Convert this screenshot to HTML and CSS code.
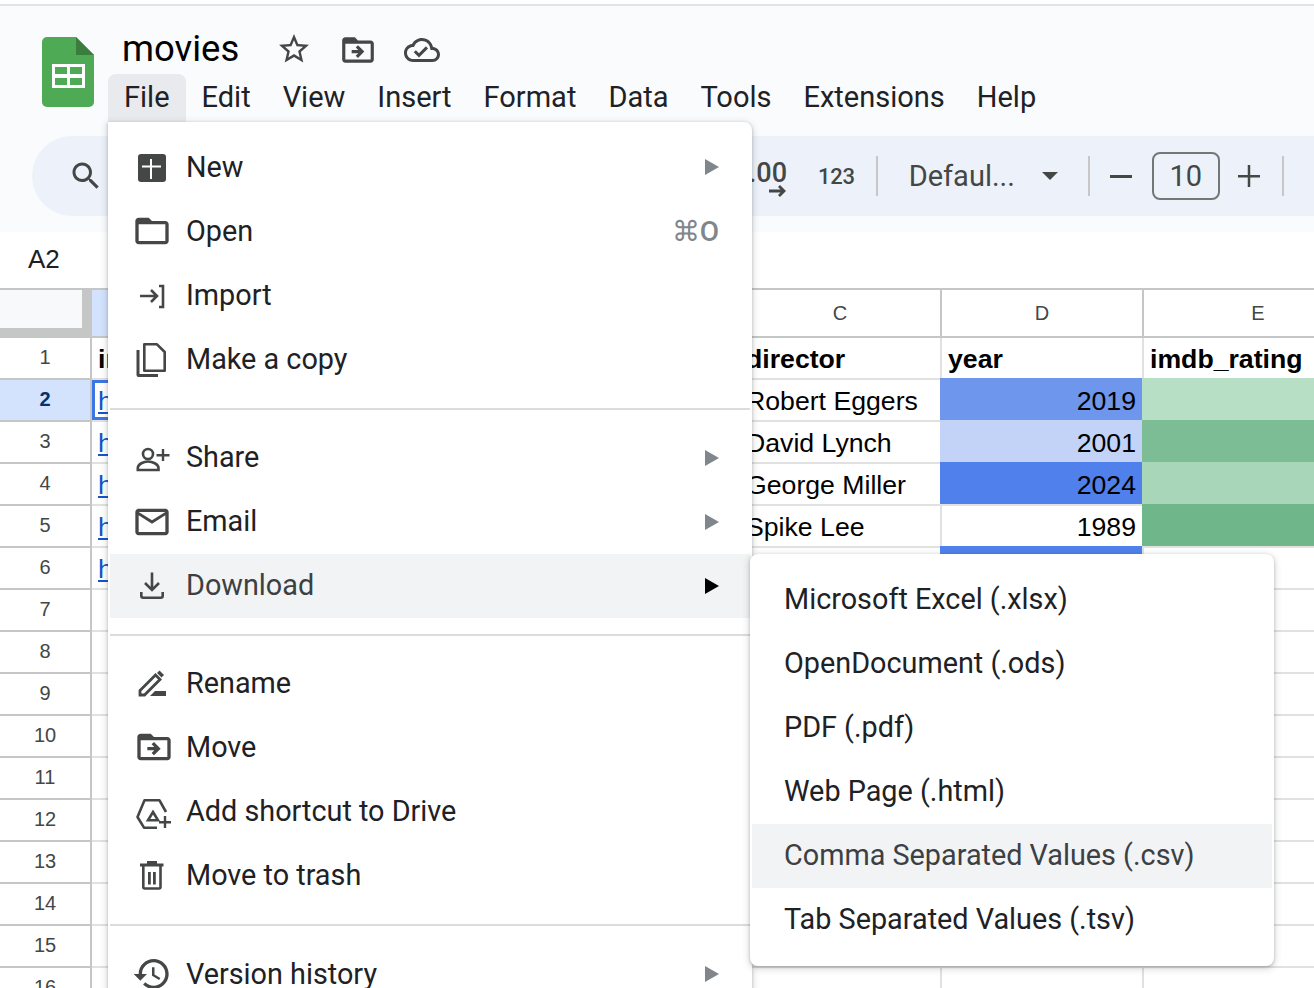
FILE: index.html
```html
<!DOCTYPE html>
<html>
<head>
  <title>movies - Google Sheets</title>
  <link rel="stylesheet" href="styles.css">
</head>
<body>

<header class="topbar">
  <svg class="logo" width="52" height="70" viewBox="0 0 52 70">
    <path d="M5 0H34L52 18V65a5 5 0 0 1-5 5H5a5 5 0 0 1-5-5V5a5 5 0 0 1 5-5z" fill="#4eaa54"/>
    <path d="M34 0L52 18H34z" fill="#3a7d3c"/>
    <path d="M10 27H43V51H10z" fill="#fff"/>
    <path d="M13 30H25V37H13zM28 30H40V37H28zM13 41H25V48H13zM28 41H40V48H28z" fill="#4eaa54"/>
  </svg>
  <div class="title-col">
    <div class="title-row">
      <span class="doc-title">movies</span>
      <svg class="star" width="36" height="36" viewBox="0 0 24 24"><path d="M22 9.24l-7.19-.62L12 2 9.19 8.63 2 9.24l5.46 4.73L5.82 21 12 17.27 18.18 21l-1.63-7.03L22 9.24zM12 15.4l-3.76 2.27 1-4.28-3.32-2.88 4.38-.38L12 6.1l1.71 4.04 4.38.38-3.32 2.88 1 4.28L12 15.4z"/></svg>
      <svg class="move-top" width="38" height="38" viewBox="0 0 24 24"><path d="M20 6h-8l-2-2H4c-1.1 0-2 .9-2 2v12c0 1.1.9 2 2 2h16c1.1 0 2-.9 2-2V8c0-1.1-.9-2-2-2zm0 12H4V8h16v10zm-8.01-9l-1.41 1.41L12.16 12H8v2h4.16l-1.59 1.59L11.99 17 16 13.01 11.99 9z"/></svg>
      <svg class="cloud" width="36" height="36" viewBox="0 0 24 24"><path d="M19.35 10.04C18.67 6.59 15.64 4 12 4 9.11 4 6.6 5.64 5.35 8.04 2.34 8.36 0 10.91 0 14c0 3.31 2.69 6 6 6h13c2.76 0 5-2.24 5-5 0-2.64-2.05-4.78-4.65-4.96zM19 18H6c-2.21 0-4-1.79-4-4 0-2.05 1.53-3.76 3.56-3.97l1.07-.11.5-.95C8.08 7.14 9.94 6 12 6c2.62 0 4.88 1.86 5.39 4.43l.3 1.5 1.53.11c1.56.1 2.78 1.41 2.78 2.96 0 1.65-1.35 3-3 3zm-9-3.82l-2.09-2.09L6.5 13.5 10 17l6.01-6.01-1.41-1.41z"/></svg>
    </div>
    <nav class="menubar">
      <span class="menubar-item active">File</span>
      <span class="menubar-item">Edit</span>
      <span class="menubar-item">View</span>
      <span class="menubar-item">Insert</span>
      <span class="menubar-item">Format</span>
      <span class="menubar-item">Data</span>
      <span class="menubar-item">Tools</span>
      <span class="menubar-item">Extensions</span>
      <span class="menubar-item">Help</span>
    </nav>
  </div>
</header>

<div class="toolbar-wrap">
  <div class="toolbar">
    <svg class="tb-search" width="36" height="36" viewBox="0 0 24 24"><path d="M15.5 14h-.79l-.28-.27C15.41 12.59 16 11.11 16 9.5 16 5.91 13.09 3 9.5 3S3 5.91 3 9.5 5.91 16 9.5 16c1.61 0 3.09-.59 4.23-1.57l.27.28v.79l5 4.99L20.49 19l-4.99-5zm-6 0C7.01 14 5 11.99 5 9.5S7.01 5 9.5 5 14 7.01 14 9.5 11.99 14 9.5 14z"/></svg>
    <div class="tb-decimals">
      <span>.00</span>
      <svg width="18" height="12" viewBox="0 0 18 12"><path d="M0 6H15M10 1L15 6L10 11" fill="none" stroke="#444746" stroke-width="2.800"/></svg>
    </div>
    <span class="tb-123">123</span>
    <span class="tb-sep"></span>
    <span class="tb-font">Defaul...</span>
    <span class="tb-caret"></span>
    <span class="tb-sep"></span>
    <svg class="tb-minus" width="22" height="22" viewBox="0 0 22 22"><path d="M0 10H22V13H0z"/></svg>
    <span class="tb-size">10</span>
    <svg class="tb-plus" width="22" height="22" viewBox="0 0 22 22"><path d="M0 10H22V12.500H0zM9.750 0H12.250V22H9.750z"/></svg>
    <span class="tb-sep"></span>
  </div>
</div>

<div class="formula-bar">A2</div>

<table class="sheet">
  <thead>
    <tr>
      <th class="corner"><span class="corner-box"></span></th>
      <th class="sel"></th><th></th><th>C</th><th>D</th><th>E</th>
    </tr>
  </thead>
  <tbody>
    <tr><th>1</th><td class="bold">imdb</td><td class="bold">title</td><td class="bold">director</td><td class="bold">year</td><td class="bold">imdb_rating</td></tr>
    <tr><th class="sel-row">2</th><td class="active-cell"><a>https</a></td><td></td><td>Robert Eggers</td><td class="num y2019">2019</td><td class="r1"></td></tr>
    <tr><th>3</th><td><a>https</a></td><td></td><td>David Lynch</td><td class="num y2001">2001</td><td class="r2"></td></tr>
    <tr><th>4</th><td><a>https</a></td><td></td><td>George Miller</td><td class="num y2024">2024</td><td class="r3"></td></tr>
    <tr><th>5</th><td><a>https</a></td><td></td><td>Spike Lee</td><td class="num">1989</td><td class="r4"></td></tr>
    <tr><th>6</th><td><a>https</a></td><td></td><td></td><td class="y2024"></td><td></td></tr>
    <tr><th>7</th><td></td><td></td><td></td><td></td><td></td></tr>
    <tr><th>8</th><td></td><td></td><td></td><td></td><td></td></tr>
    <tr><th>9</th><td></td><td></td><td></td><td></td><td></td></tr>
    <tr><th>10</th><td></td><td></td><td></td><td></td><td></td></tr>
    <tr><th>11</th><td></td><td></td><td></td><td></td><td></td></tr>
    <tr><th>12</th><td></td><td></td><td></td><td></td><td></td></tr>
    <tr><th>13</th><td></td><td></td><td></td><td></td><td></td></tr>
    <tr><th>14</th><td></td><td></td><td></td><td></td><td></td></tr>
    <tr><th>15</th><td></td><td></td><td></td><td></td><td></td></tr>
    <tr><th>16</th><td></td><td></td><td></td><td></td><td></td></tr>
  </tbody>
</table>

<div class="menu file-menu">
  <div class="item">
    <svg class="icon" viewBox="0 0 40 40"><rect x="6" y="7" width="28" height="28" rx="3"/><path d="M10 18.500H18V12H20V18.500H29V20.500H20V32H18V20.500H10z" fill="#fff"/></svg>
    <span class="label">New</span><span class="arrow"></span>
  </div>
  <div class="item">
    <svg class="icon" viewBox="0 0 24 24"><path d="M20 6h-8l-2-2H4c-1.100 0-2 .9-2 2v12c0 1.100.9 2 2 2h16c1.100 0 2-.9 2-2V8c0-1.100-.9-2-2-2zm0 12H4V8h16v10z"/></svg>
    <span class="label">Open</span><span class="shortcut">⌘O</span>
  </div>
  <div class="item">
    <svg class="icon" viewBox="0 0 40 40"><path d="M8 21H25M19 15L25 21L19 27M27 11H31V32H27" fill="none" stroke="#444746" stroke-width="2.600"/></svg>
    <span class="label">Import</span>
  </div>
  <div class="item">
    <svg class="icon" viewBox="0 0 40 40"><path d="M12.300 5.300H25L32.700 13V31.700H12.300z" fill="none" stroke="#444746" stroke-width="2.600" stroke-linejoin="round"/><path d="M4.500 11H7.500V35H26V38H6.500a2 2 0 0 1-2-2z"/></svg>
    <span class="label">Make a copy</span>
  </div>
  <div class="sep"></div>
  <div class="item">
    <svg class="icon" viewBox="0 0 40 40"><circle cx="16" cy="16" r="5" fill="none" stroke="#444746" stroke-width="2.600"/><path d="M5.800 32V30c0-4 6-6.500 10.200-6.500s10.500 2.500 10.500 6.500v2z" fill="none" stroke="#444746" stroke-width="2.600"/><path d="M29.800 11H32.200V16H37.500V18.400H32.200V23H29.800V18.400H24.500V16H29.800z"/></svg>
    <span class="label">Share</span><span class="arrow"></span>
  </div>
  <div class="item">
    <svg class="icon" viewBox="0 0 24 24"><path d="M20 4H4c-1.100 0-2 .9-2 2v12c0 1.100.9 2 2 2h16c1.100 0 2-.9 2-2V6c0-1.100-.9-2-2-2zm0 14H4V8l8 5 8-5v10zm-8-7L4 6h16l-8 5z"/></svg>
    <span class="label">Email</span><span class="arrow"></span>
  </div>
  <div class="item hover">
    <svg class="icon" viewBox="0 0 40 40"><path d="M20 6.500V24M13 17L20 24L27 17M9.300 26V29.700a2 2 0 0 0 2 2H28.700a2 2 0 0 0 2-2V26" fill="none" stroke="#444746" stroke-width="2.600"/></svg>
    <span class="label">Download</span><span class="arrow"></span>
  </div>
  <div class="sep"></div>
  <div class="item">
    <svg class="icon" viewBox="0 0 40 40"><path d="M8 32V27.500L23.500 12L28 16.500L12.500 32z" fill="none" stroke="#444746" stroke-width="2.800"/><path d="M25 10L27.500 7.500L32 12L29.500 14.500z"/><path d="M23 28H34V33H18z"/></svg>
    <span class="label">Rename</span>
  </div>
  <div class="item">
    <svg class="icon shift" viewBox="0 0 24 24"><path d="M20 6h-8l-2-2H4c-1.100 0-2 .9-2 2v12c0 1.100.9 2 2 2h16c1.100 0 2-.9 2-2V8c0-1.100-.9-2-2-2zm0 12H4V8h16v10zm-8.010-9l-1.410 1.410L12.160 12H8v2h4.160l-1.590 1.590L11.990 17 16 13.010 11.990 9z"/></svg>
    <span class="label">Move</span>
  </div>
  <div class="item">
    <svg class="icon" viewBox="0 0 40 40"><path d="M34 21L27.500 9.300H12.500L5.500 26L12 36.700H25" fill="none" stroke="#444746" stroke-width="2.600" stroke-linejoin="round"/><path d="M21 21L26 29.300H16z" fill="none" stroke="#444746" stroke-width="2.600"/><path d="M31.800 25H34.200V30H39V32.400H34.200V37H31.800V32.400H27V30H31.800z"/></svg>
    <span class="label">Add shortcut to Drive</span>
  </div>
  <div class="item">
    <svg class="icon" viewBox="0 0 40 40"><path d="M8 8.500H31.500V11.500H8zM15 6H25V9H15z"/><path d="M11.300 11V32a1.500 1.500 0 0 0 1.500 1.500H27a1.500 1.500 0 0 0 1.500-1.500V11" fill="none" stroke="#444746" stroke-width="2.600"/><path d="M16 17H18.800V29.500H16zM21 17H23.800V29.500H21z"/></svg>
    <span class="label">Move to trash</span>
  </div>
  <div class="sep"></div>
  <div class="item">
    <svg class="icon" viewBox="0 0 24 24"><path d="M13 3c-4.970 0-9 4.030-9 9H1l3.890 3.890.07.140L9 12H6c0-3.870 3.130-7 7-7s7 3.130 7 7-3.130 7-7 7c-1.930 0-3.680-.79-4.940-2.060l-1.420 1.420C8.270 19.990 10.510 21 13 21c4.970 0 9-4.030 9-9s-4.030-9-9-9zm-1 5v5l4.280 2.540.72-1.210-3.500-2.080V8H12z"/></svg>
    <span class="label">Version history</span><span class="arrow"></span>
  </div>
</div>

<div class="menu sub-menu">
  <div class="item"><span class="label">Microsoft Excel (.xlsx)</span></div>
  <div class="item"><span class="label">OpenDocument (.ods)</span></div>
  <div class="item"><span class="label">PDF (.pdf)</span></div>
  <div class="item"><span class="label">Web Page (.html)</span></div>
  <div class="item hover"><span class="label">Comma Separated Values (.csv)</span></div>
  <div class="item"><span class="label">Tab Separated Values (.tsv)</span></div>
</div>

</body>
</html>
```

FILE: styles.css
```css
html, body {
  margin: 0;
  height: 988px;
  overflow: hidden;
}

body {
  position: relative;
  background: #fff;
  font-family: Roboto, sans-serif;
  color: #1f1f1f;
}

/* top area */
.topbar {
  display: flex;
  height: 130px;
  margin-top: 4px;
  padding-left: 42px;
  box-sizing: content-box;
  background: #f9fbfd;
  border-top: 2px solid #e1e3e6;
}

.logo {
  margin-top: 31px;
}

.title-col {
  margin-left: 14px;
}

.title-row {
  display: flex;
  align-items: center;
  height: 68px;
  padding-left: 14px;
  fill: #444746;
}

.doc-title {
  font-size: 36.5px;
  color: #000;
  margin-right: 37px;
  position: relative;
  top: 8px;
}

.star { margin-right: 27px; margin-top: 18px; }
.move-top { margin-right: 27px; margin-top: 20px; }
.cloud { margin-top: 20px; }

.menubar {
  display: flex;
}

.menubar-item {
  height: 48px;
  line-height: 46px;
  padding: 0 16px;
  font-size: 29px;
  color: #202124;
}

.menubar-item.active {
  background: #e8eaed;
  border-radius: 8px 8px 0 0;
}

.toolbar-wrap {
  background: #f9fbfd;
  padding: 0 0 16px 32px;
}

.toolbar {
  display: flex;
  align-items: center;
  height: 80px;
  background: #edf2fa;
  border-radius: 40px 0 0 40px;
  padding-left: 36px;
  fill: #444746;
  color: #444746;
}

.tb-search { flex: none; }

.tb-decimals {
  display: flex;
  flex-direction: column;
  align-items: flex-end;
  margin-left: 648px;
  padding-top: 6px;
  width: 35px;
  font-size: 27px;
  font-weight: 500;
  line-height: 24px;
}

.tb-123 {
  margin-left: 31px;
  font-size: 22px;
  font-weight: 500;
  letter-spacing: -.3px;
}

.tb-sep {
  width: 2px;
  height: 40px;
  background: #c7c7c7;
  margin-left: 21px;
}

.tb-font {
  margin-left: 31px;
  font-size: 29px;
}

.tb-caret {
  margin-left: 27px;
  border-left: 8px solid transparent;
  border-right: 8px solid transparent;
  border-top: 8px solid #444746;
}

.tb-caret + .tb-sep { margin-left: 30px; }

.tb-minus { margin-left: 20px; }

.tb-size {
  width: 68px;
  height: 48px;
  box-sizing: border-box;
  margin-left: 20px;
  border: 2px solid #747775;
  border-radius: 8px;
  text-align: center;
  line-height: 44px;
  font-size: 29px;
}

.tb-plus { margin-left: 18px; }
.tb-plus + .tb-sep { margin-left: 22px; }

.formula-bar {
  height: 56px;
  line-height: 54px;
  padding-left: 28px;
  font-family: "Liberation Sans", Arial, sans-serif;
  font-size: 26px;
  color: #1f1f1f;
}

/* sheet */
.sheet {
  width: 1374px;
  table-layout: fixed;
  border-collapse: separate;
  border-spacing: 0;
  border-top: 2px solid #c4c7c5;
  font-family: "Liberation Sans", Arial, sans-serif;
  font-size: 26.67px;
  color: #000;
}

.sheet thead th {
  height: 48px;
  font-size: 20px;
  font-weight: 400;
  color: #444746;
  border-right: 2px solid #c4c7c5;
  border-bottom: 2px solid #c4c7c5;
}

.sheet thead th:nth-child(1) { width: 92px; }
.sheet thead th:nth-child(2) { width: 308px; }
.sheet thead th:nth-child(3) { width: 340px; }
.sheet thead th:nth-child(4) { width: 202px; }
.sheet thead th:nth-child(5) { width: 202px; }
.sheet thead th:nth-child(6) { width: 230px; }

.sheet th, .sheet td {
  box-sizing: border-box;
  padding: 0 6px;
  overflow: hidden;
  white-space: nowrap;
}

.sheet tbody tr {
  height: 42px;
}

.sheet tbody th {
  font-size: 20px;
  font-weight: 400;
  color: #444746;
  border-right: 2px solid #c4c7c5;
  border-bottom: 2px solid #c4c7c5;
  background: #fff;
  padding-right: 0;
  padding-left: 0;
  padding-bottom: 2px;
}

.sheet td {
  border-right: 2px solid #e1e1e1;
  border-bottom: 2px solid #e1e1e1;
  line-height: 30px;
  padding-top: 2px;
}

.sheet .corner {
  padding: 0;
  vertical-align: top;
  background: #c4c7c5;
  border: 0;
}

.corner-box {
  display: block;
  width: 82px;
  height: 38px;
  background: #f8f9fa;
}

.sheet thead th.sel { background: #d3e3fd; }

.sheet tbody th.sel-row {
  background: #d3e3fd;
  color: #0b2f6b;
  font-weight: 700;
}

.sheet td.bold { font-weight: 700; }
.sheet td.num { text-align: right; }

.sheet td a {
  color: #1155cc;
  text-decoration: underline;
}

.sheet td.active-cell {
  box-shadow: inset 0 0 0 3px #3b76e4;
}

/* colour scale fills also cover the cell's left and top grid lines */
.y2019 { background: #6d96ec; box-shadow: -2px -2px 0 #6d96ec; }
.y2001 { background: #c2d3f7; box-shadow: -2px -2px 0 #c2d3f7; }
.y2024 { background: #5080eb; box-shadow: -2px -2px 0 #5080eb; }
.r1 { background: #b7dfc6; box-shadow: -2px -2px 0 #b7dfc6; }
.r2 { background: #7cbd95; box-shadow: -2px -2px 0 #7cbd95; }
.r3 { background: #a8d6b9; box-shadow: -2px -2px 0 #a8d6b9; }
.r4 { background: #6fb68a; box-shadow: -2px -2px 0 #6fb68a; }

/* menus */
.menu {
  position: absolute;
  box-sizing: border-box;
  background: #fff;
  border: 2px solid #fff;
  border-radius: 8px;
  box-shadow: 0 2px 6px 2px rgba(60, 64, 67, .15), 0 1px 3px rgba(60, 64, 67, .3);
  font-size: 28.8px;
  color: #202124;
}

.file-menu {
  left: 108px;
  top: 122px;
  width: 644px;
  padding-top: 11px;
  border-top-left-radius: 0;
}

.sub-menu {
  left: 750px;
  top: 554px;
  width: 524px;
  padding: 12px 0;
}

.item {
  display: flex;
  align-items: center;
  height: 64px;
  padding: 0 31px 0 22px;
}

.sub-menu .item { padding-left: 32px; }

.item.hover {
  background: #f1f3f4;
}

.item.hover .label { color: #3c4043; }

.icon {
  flex: none;
  width: 40px;
  height: 40px;
  margin-right: 14px;
  fill: #444746;
}

.icon.shift { transform: translateX(2px); }

.label {
  flex: 1;
  position: relative;
}

.sep ~ .item .label,
.sub-menu .label { top: -1px; }

.item.hover + .sep ~ .item .label { top: 0; }

.arrow {
  border-top: 8px solid transparent;
  border-bottom: 8px solid transparent;
  border-left: 14px solid #80868b;
}

.item.hover .arrow { border-left-color: #000; }

.shortcut {
  color: #80868b;
  font-size: 28px;
  font-weight: 500;
}

.sep {
  height: 2px;
  margin: 17px 0 16px;
  background: #dadce0;
}

.item.hover + .sep { margin-top: 16px; }
.item.hover + .sep + .item { margin-top: -1px; }
```
